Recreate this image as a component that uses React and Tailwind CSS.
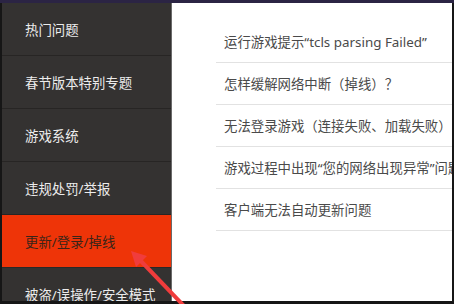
export default function App() {
  const side = [
    "热门问题",
    "春节版本特别专题",
    "游戏系统",
    "违规处罚/举报",
    "更新/登录/掉线",
    "被盗/误操作/安全模式",
  ];
  const rows = [
    "运行游戏提示“tcls parsing Failed”",
    "怎样缓解网络中断（掉线）？",
    "无法登录游戏（连接失败、加载失败）怎么办",
    "游戏过程中出现“您的网络出现异常”问题",
    "客户端无法自动更新问题",
  ];
  return (
    <div
      className="relative w-[454px] h-[304px] overflow-hidden bg-[#161616] flex flex-col"
      style={{ fontFamily: '"Noto Sans", "Noto Sans CJK SC", sans-serif' }}
    >
      <div className="h-[3px] bg-[#2b2444] shrink-0" />
      <div className="flex flex-1 min-h-0 pl-[2px] pr-[2px] pb-[3px]">
        <aside className="w-[169px] shrink-0 bg-[#343231] flex flex-col overflow-hidden">
          {side.map((t, i) => (
            <div
              key={t}
              className={
                i === 4
                  ? "h-[53px] shrink-0 flex items-center pl-[23px] pt-[2px] border-b border-[#2a2827] bg-[#ee3408] text-[#3a2418] text-[13.4px] whitespace-nowrap"
                  : "h-[53px] shrink-0 flex items-center pl-[23px] pt-[2px] border-b border-[#272524] text-[#ececec] text-[13.4px] whitespace-nowrap"
              }
            >
              {t}
            </div>
          ))}
        </aside>
        <div className="w-[1px] bg-[#6a6a6a] shrink-0" />
        <main className="flex-1 min-w-0 bg-white pt-[18px] pl-[44px] overflow-hidden">
          {rows.map((t) => (
            <div
              key={t}
              className="h-[42px] flex items-center pl-[8px] pt-[1px] border-b border-[#e2e2e2] text-[#4a4a4a] text-[13.4px] whitespace-nowrap overflow-hidden"
            >
              {t}
            </div>
          ))}
        </main>
      </div>
      <svg
        className="absolute left-0 top-0 pointer-events-none"
        width="454"
        height="304"
        viewBox="0 0 454 304"
      >
        <line x1="184" y1="306" x2="138" y2="258" stroke="#f03c3c" strokeWidth="4" />
        <polygon points="131,251 147,256 136,267" fill="#f03c3c" />
      </svg>
    </div>
  );
}
